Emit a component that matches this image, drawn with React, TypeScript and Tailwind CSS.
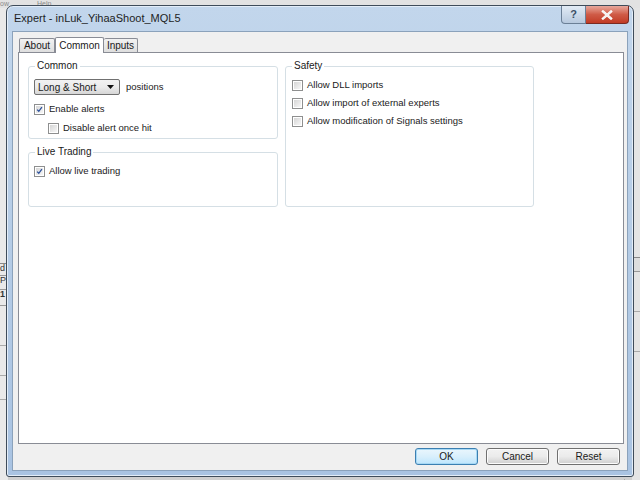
import type { ReactNode } from 'react';

const ui = { fontFamily: '"Liberation Sans", Arial, sans-serif' };

function CheckBox({ checked, label }: { checked?: boolean; label: string }) {
  return (
    <div className="flex items-center gap-[4px] h-[14px]">
      <div className="w-[11px] h-[11px] border border-[#8e8f8f] bg-white p-[1px] shrink-0">
        <div className="w-full h-full bg-gradient-to-br from-[#d6d6d6] to-[#f7f7f7] relative">
          {checked && (
            <svg viewBox="0 0 9 9" className="absolute inset-0 w-full h-full">
              <path d="M1.5 4.6 L3.6 6.8 L7.6 1.6" fill="none" stroke="#2a4f9a" strokeWidth="1.6" />
            </svg>
          )}
        </div>
      </div>
      <span className="text-[9.5px] text-[#1a1a1a] leading-none">{label}</span>
    </div>
  );
}

function Group({ title, className, children }: { title: string; className?: string; children?: ReactNode }) {
  return (
    <div className={`relative border border-[#d5dfe5] rounded-[3px] ${className ?? ''}`}>
      <span className="absolute -top-[7px] left-[6px] bg-white px-[2px] text-[10px] leading-[12px] text-[#1a1a1a]">
        {title}
      </span>
      {children}
    </div>
  );
}

function Button({ label, primary }: { label: string; primary?: boolean }) {
  return (
    <div
      className={`w-[63px] h-[17px] rounded-[3px] border flex items-center justify-center text-[10px] text-[#1a1a1a] ${
        primary
          ? 'border-[#3c7fb1] bg-gradient-to-b from-[#eaf6fd] via-[#d9effc] to-[#bee6fd] shadow-[inset_0_0_0_1px_#a7d9f5]'
          : 'border-[#707070] bg-gradient-to-b from-[#f2f2f2] via-[#ebebeb] to-[#cfcfcf] shadow-[inset_0_0_0_1px_#fcfcfc]'
      }`}
    >
      {label}
    </div>
  );
}

export default function App() {
  return (
    <div className="relative w-[640px] h-[480px] overflow-hidden bg-[#cfcfcf]" style={ui}>
      {/* main terminal window behind the dialog */}
      <div className="absolute top-0 left-0 right-0 h-[8px] bg-[#e2e2e2] flex items-start gap-[16px] text-[7px] leading-[7px] text-[#8a8a8a]">
        <span>ow</span>
        <span className="ml-[12px]">Help</span>
      </div>
      <div className="absolute left-0 top-[8px] w-[8px] bottom-0 bg-[#e9e9e9] flex flex-col text-[9px] leading-none text-[#333]">
        <div className="h-[256px] border-b border-[#888]" />
        <div className="h-[12px] border-b border-[#999]">d</div>
        <div className="h-[14px] border-b border-[#999]">P</div>
        <div className="h-[16px] border-b border-[#999] font-bold">1</div>
        <div className="h-[40px] border-b border-[#aaa]" />
        <div className="h-[30px] border-b border-[#aaa]" />
        <div className="h-[24px] border-b border-[#aaa]" />
      </div>
      <div className="absolute right-0 top-[8px] w-[8px] bottom-0 bg-[#e4e4e4] flex flex-col">
        <div className="h-[250px] border-b border-[#888]" />
        <div className="h-[14px] border-b border-[#999] bg-[#ddd]" />
        <div className="h-[40px] border-b border-[#aaa]" />
        <div className="h-[40px] border-b border-[#aaa]" />
      </div>

      {/* dialog window */}
      <div className="absolute left-[6px] top-[5px] w-[628px] h-[472px] rounded-t-[7px] rounded-b-[3px] border border-[#3f4c5a] bg-gradient-to-b from-[#c2d6ec] via-[#b5cce6] to-[#a9c3e2] shadow-[inset_0_0_0_1px_#e3edf8] flex flex-col">
        <div className="h-[25px] flex items-center pl-[7px] relative">
          <span className="text-[11px] text-[#1e1e1e]">Expert - inLuk_YihaaShoot_MQL5</span>
          <div className="absolute top-0 right-[4px] flex">
            <div className="w-[25px] h-[18px] rounded-bl-[4px] border border-[#6b7f96] border-t-0 bg-gradient-to-b from-[#e2ebf5] to-[#b7c9de] flex items-center justify-center text-[11px] font-bold text-[#3b4f66]">
              ?
            </div>
            <div className="w-[43px] h-[18px] rounded-br-[4px] border border-[#7a2a22] border-t-0 border-l-0 bg-gradient-to-b from-[#e6a79c] via-[#cf5b47] to-[#c13a24] flex items-center justify-center">
              <svg viewBox="0 0 12 10" className="w-[12px] h-[10px]">
                <path d="M2 1.5 L10 8.5 M10 1.5 L2 8.5" stroke="#fff" strokeWidth="2.4" strokeLinecap="square" />
                <path d="M2 1.5 L10 8.5 M10 1.5 L2 8.5" stroke="#f2f2f2" strokeWidth="1.2" />
              </svg>
            </div>
          </div>
        </div>

        <div className="mx-[5px] mb-[5px] flex-1 border border-[#8ba2bb] bg-[#f0f0f0] flex flex-col pt-[4px] pl-[5px] pr-[3px]">
          {/* tab strip */}
          <div className="flex items-end h-[16px] pl-[1px] text-[10px] text-[#1a1a1a]">
            <div className="w-[36px] h-[14px] border border-[#898c95] border-b-0 rounded-t-[2px] bg-gradient-to-b from-[#f2f2f2] to-[#dedede] flex items-center justify-center">
              About
            </div>
            <div className="w-[49px] h-[16px] border border-[#898c95] border-b-0 rounded-t-[2px] bg-white flex items-center justify-center -mb-[1px] relative z-10">
              Common
            </div>
            <div className="w-[34px] h-[14px] border border-[#898c95] border-b-0 border-l-0 rounded-t-[2px] bg-gradient-to-b from-[#f2f2f2] to-[#dedede] flex items-center justify-center">
              Inputs
            </div>
          </div>

          {/* tab page */}
          <div className="h-[392px] border border-[#898c95] bg-white pt-[13px] pl-[9px] flex gap-[7px]">
            <div className="flex flex-col gap-[13px]">
              <Group title="Common" className="w-[250px] h-[73px] pt-[12px] pl-[5px]">
                <div className="flex items-center gap-[6px]">
                  <div className="w-[86px] h-[16px] rounded-[2px] border border-[#707070] bg-gradient-to-b from-[#f2f2f2] via-[#ebebeb] to-[#d6d6d6] flex items-center justify-between pl-[3px] pr-[5px] text-[10px] text-[#1a1a1a]">
                    <span>Long &amp; Short</span>
                    <svg viewBox="0 0 7 4" className="w-[7px] h-[4px]">
                      <path d="M0 0 H7 L3.5 4 Z" fill="#111" />
                    </svg>
                  </div>
                  <span className="text-[9.5px] text-[#1a1a1a]">positions</span>
                </div>
                <div className="mt-[7px]">
                  <CheckBox checked label="Enable alerts" />
                </div>
                <div className="mt-[5px] pl-[14px]">
                  <CheckBox label="Disable alert once hit" />
                </div>
              </Group>
              <Group title="Live Trading" className="w-[250px] h-[55px] pt-[11px] pl-[5px]">
                <CheckBox checked label="Allow live trading" />
              </Group>
            </div>
            <Group title="Safety" className="w-[249px] h-[141px] pt-[11px] pl-[6px] flex flex-col gap-[4px]">
              <CheckBox label="Allow DLL imports" />
              <CheckBox label="Allow import of external experts" />
              <CheckBox label="Allow modification of Signals settings" />
            </Group>
          </div>

          {/* dialog buttons */}
          <div className="flex justify-end gap-[8px] pt-[4px] pr-[4px] relative">
            <Button label="OK" primary />
            <Button label="Cancel" />
            <Button label="Reset" />
            <svg viewBox="0 0 6 6" className="absolute right-[-2px] bottom-[-20px] w-[6px] h-[6px]">
              <rect x="4" y="0" width="1" height="1" fill="#aaa" />
              <rect x="2" y="2" width="1" height="1" fill="#aaa" />
              <rect x="4" y="2" width="1" height="1" fill="#aaa" />
              <rect x="0" y="4" width="1" height="1" fill="#aaa" />
              <rect x="2" y="4" width="1" height="1" fill="#aaa" />
              <rect x="4" y="4" width="1" height="1" fill="#aaa" />
            </svg>
          </div>
        </div>
      </div>
    </div>
  );
}
